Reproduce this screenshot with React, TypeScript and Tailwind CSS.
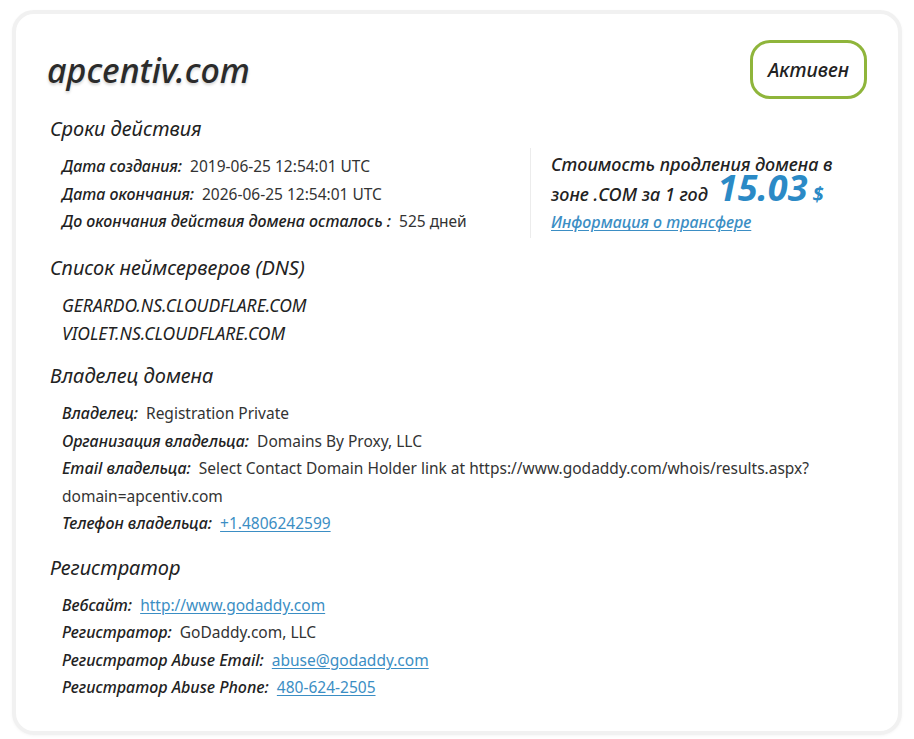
import type { ReactNode } from "react";

const label = "font-['Noto_Sans',sans-serif] italic font-medium text-[16px] text-[#222] mr-2";
const value = "font-['Noto_Sans',sans-serif] text-[15.5px] text-[#333]";
const link = "text-[#3b8ec4] underline underline-offset-2";

function Row({ k, children }: { k: string; children: ReactNode }) {
  return (
    <div className="leading-[27.5px]">
      <span className={label}>{k}</span>
      <span className={value}>{children}</span>
    </div>
  );
}

function Heading({ children, mb = "mb-[10px]" }: { children: ReactNode; mb?: string }) {
  return (
    <h2 className={"font-['Noto_Sans',sans-serif] italic text-[20px] leading-[28px] text-[#222] ml-[3px] " + mb}>
      {children}
    </h2>
  );
}

export default function App() {
  return (
    <div className="min-h-screen bg-white pt-[10px] px-[12px] pb-[9px]">
      <div className="rounded-[22px] border-[4px] border-[#f1f1f1] bg-white px-[31px] pt-[26px] pb-[29px] shadow-[0_1px_3px_rgba(0,0,0,0.04)]">
        <div className="flex items-center justify-between">
          <h1 className="font-['Noto_Sans',sans-serif] italic font-medium text-[34px] leading-[44px] text-[#2b2b2b] [text-shadow:0_2px_3px_rgba(0,0,0,0.18)]">
            apcentiv.com
          </h1>
          <div className="flex h-[59px] w-[117px] items-center justify-center rounded-[20px] border-[3px] border-[#8fb53b] font-['Noto_Sans',sans-serif] italic font-medium text-[19.5px] text-[#222]">
            Активен
          </div>
        </div>

        <div className="mt-[16px]">
          <Heading>Сроки действия</Heading>
          <div className="flex">
            <div className="w-[483px] pl-[15px]">
              <Row k="Дата создания:">2019-06-25 12:54:01 UTC</Row>
              <Row k="Дата окончания:">2026-06-25 12:54:01 UTC</Row>
              <Row k="До окончания действия домена осталось :">525 дней</Row>
            </div>
            <div className="mt-[-5px] h-[90px] w-[330px] border-l border-[#ececec] pl-[20px] pt-[1px]">
              <p className="font-['Noto_Sans',sans-serif] italic font-medium text-[18px] leading-[30px] text-[#222]">
                Стоимость продления домена в
              </p>
              <p className="flex h-[30px] items-baseline font-['Noto_Sans',sans-serif] italic font-medium text-[18px] leading-[30px] text-[#222]">
                <span>зоне .COM за 1 год</span>
                <span className="ml-[10px] font-bold text-[36px] leading-[16px] text-[#2b8ac6]">15.03</span>
                <span className="ml-[5px] font-bold text-[20px] leading-[16px] text-[#2b8ac6]">$</span>
              </p>
              <a className={"block font-['Noto_Sans',sans-serif] italic font-medium text-[16px] leading-[24px] mt-[1px] " + link}>
                Информация о трансфере
              </a>
            </div>
          </div>
        </div>

        <div className="mt-[16px]">
          <Heading mb="mb-[9px]">Список неймсерверов (DNS)</Heading>
          <div className="pl-[15px]">
            <div className="font-['Noto_Sans',sans-serif] italic text-[17.5px] leading-[28px] text-[#222]">GERARDO.NS.CLOUDFLARE.COM</div>
            <div className="font-['Noto_Sans',sans-serif] italic text-[17.5px] leading-[28px] text-[#222]">VIOLET.NS.CLOUDFLARE.COM</div>
          </div>
        </div>

        <div className="mt-[15px]">
          <Heading>Владелец домена</Heading>
          <div className="pl-[15px]">
            <Row k="Владелец:">Registration Private</Row>
            <Row k="Организация владельца:">Domains By Proxy, LLC</Row>
            <Row k="Email владельца:">
              Select Contact Domain Holder link at https://www.godaddy.com/whois/results.aspx?<wbr />domain=apcentiv.com
            </Row>
            <Row k="Телефон владельца:">
              <a className={link}>+1.4806242599</a>
            </Row>
          </div>
        </div>

        <div className="mt-[16px]">
          <Heading>Регистратор</Heading>
          <div className="pl-[15px]">
            <Row k="Вебсайт:">
              <a className={link}>http://www.godaddy.com</a>
            </Row>
            <Row k="Регистратор:">GoDaddy.com, LLC</Row>
            <Row k="Регистратор Abuse Email:">
              <a className={link}>abuse@godaddy.com</a>
            </Row>
            <Row k="Регистратор Abuse Phone:">
              <a className={link}>480-624-2505</a>
            </Row>
          </div>
        </div>
      </div>
    </div>
  );
}
